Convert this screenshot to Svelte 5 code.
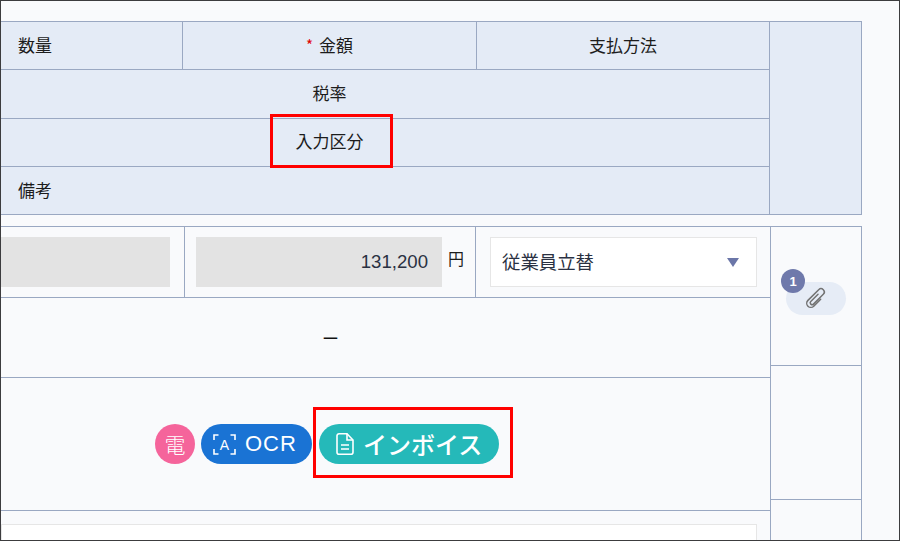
<script>
  const headTop = [
    { label: '数量', cls: 'left' },
    { label: '金額', cls: '', req: true },
    { label: '支払方法', cls: '' }
  ];
</script>

<div class="frame">
  <div class="table head">
    <div class="main">
      <div class="row r48 three-head">
        {#each headTop as c}
          <div class="cell {c.cls}">
            {#if c.req}<span class="req">*</span>{/if}{c.label}
          </div>
        {/each}
      </div>
      <div class="row r49"><div class="cell off">税率</div></div>
      <div class="row r48"><div class="cell off up">入力区分</div></div>
      <div class="row r48 last"><div class="cell left">備考</div></div>
    </div>
    <div class="side"></div>
  </div>

  <div class="table body">
    <div class="main">
      <div class="row amounts">
        <div class="slot first"><div class="gray"></div></div>
        <div class="slot second">
          <div class="gray num">131,200</div>
          <span class="yen">円</span>
        </div>
        <div class="slot third">
          <div class="select">
            <span class="sel-text">従業員立替</span>
            <svg class="caret" width="12" height="9" viewBox="0 0 12 9"><path d="M0 0h12L6 9z" fill="#6b76a8" /></svg>
          </div>
        </div>
      </div>
      <div class="row tax"><span class="dash">ー</span></div>
      <div class="row tags">
        <span class="den">電</span>
        <span class="pill ocr">
          <svg width="23" height="21" viewBox="0 0 23 21" fill="none" stroke="#fff" stroke-width="1.6">
            <path d="M1 6V1h4.500M17.500 1H22v5M1 15v5h4.500M17.500 20H22v-5" />
            <text x="11.500" y="15.500" text-anchor="middle" class="a">A</text>
          </svg>
          <span>OCR</span>
        </span>
        <span class="pill inv">
          <svg width="18" height="22" viewBox="0 0 18 22" fill="none" stroke="#fff" stroke-width="1.6">
            <path d="M1 2.800A2 2 0 0 1 3 .800h8L17 7v12.200a2 2 0 0 1-2 2H3a2 2 0 0 1-2-2z" />
            <path d="M11 .800V7h6M5 12h8M5 16h8" />
          </svg>
          <span class="inv-text">インボイス</span>
        </span>
      </div>
      <div class="row note"><div class="area"></div></div>
    </div>
    <div class="side">
      <div class="sc s1">
        <span class="clip">
          <span class="badge">1</span>
          <svg class="clip-icon" width="24" height="24" viewBox="-12 -12 24 24" fill="none" stroke="#727272" stroke-width="1.800" stroke-linecap="round" stroke-linejoin="round">
            <path transform="rotate(45) scale(.82)" d="M-1.500-5V7.500a2.300 2.300 0 0 0 4.600 0V-9.500a4 4 0 0 0-8 0V9a5 5 0 0 0 10 0V-3" />
          </svg>
        </span>
      </div>
      <div class="sc s2"></div>
      <div class="sc s3"></div>
    </div>
  </div>

  <div class="mark m1"></div>
  <div class="mark m2"></div>
</div>

<style>
  :global(body) {
    margin: 0;
  }
  .frame {
    position: relative;
    box-sizing: border-box;
    width: 900px;
    height: 541px;
    overflow: hidden;
    border: 1px solid #3c3c3e;
    padding-top: 20px;
    background: #f9fafc;
    font-family: "Noto Sans CJK JP", "Liberation Sans", sans-serif;
    font-size: 17px;
    color: #1c1c1c;
  }
  .table {
    display: grid;
    width: 861px;
    box-sizing: border-box;
    border-top: 1px solid #9aa8c2;
    border-right: 1px solid #9aa8c2;
  }
  .main {
    border-right: 1px solid #9aa8c2;
  }
  .head {
    grid-template-columns: 769px 91px;
    background: #e4ebf6;
    border-bottom: 1px solid #9aa8c2;
    height: 194px;
  }
  .body {
    grid-template-columns: 770px 90px;
    margin-top: 11px;
    height: 320px;
  }
  .row {
    box-sizing: border-box;
    display: flex;
    border-bottom: 1px solid #9aa8c2;
  }
  .row.last {
    border-bottom: 0;
  }
  .r48 {
    height: 48px;
  }
  .r49 {
    height: 49px;
  }
  .r48.last {
    height: 47px;
  }
  .cell {
    flex: 1;
    display: flex;
    align-items: center;
    justify-content: center;
    padding-bottom: 3px;
    box-sizing: border-box;
    font-size: 17px;
  }
  .cell.left {
    justify-content: flex-start;
    padding-left: 17px;
  }
  .cell.off {
    padding-right: 111px;
  }
  .cell.up {
    padding-bottom: 5px;
  }
  .three-head .cell:nth-child(1) {
    flex: 0 0 182px;
    border-right: 1px solid #9aa8c2;
  }
  .three-head .cell:nth-child(2) {
    flex: 0 0 294px;
    border-right: 1px solid #9aa8c2;
  }
  .req {
    color: #e00000;
    font-size: 15px;
    line-height: 1;
    margin-right: 6px;
  }
  .amounts {
    height: 71px;
  }
  .slot {
    box-sizing: border-box;
    display: flex;
    align-items: flex-start;
    padding-top: 10px;
  }
  .first {
    flex: 0 0 184px;
    border-right: 1px solid #9aa8c2;
    padding-right: 14px;
  }
  .second {
    flex: 0 0 291px;
    border-right: 1px solid #9aa8c2;
    padding-left: 11px;
  }
  .third {
    flex: 0 0 294px;
    padding-left: 14px;
  }
  .gray {
    background: #e3e3e3;
    height: 50px;
    flex: 1;
  }
  .num {
    flex: 0 0 246px;
    box-sizing: border-box;
    padding-right: 14px;
    text-align: right;
    line-height: 49px;
    font-family: "Liberation Sans", sans-serif;
    font-size: 18.600px;
    color: #2a3142;
  }
  .yen {
    margin-left: 6px;
    font-size: 16px;
    line-height: 42px;
  }
  .select {
    box-sizing: border-box;
    width: 267px;
    height: 50px;
    background: #fff;
    border: 1px solid #e6e6e6;
    display: flex;
    align-items: center;
    justify-content: space-between;
    padding: 0 17px 0 11px;
    font-size: 18.400px;
    color: #2a3142;
  }
  .sel-text {
    margin-top: -2px;
  }
  .tax {
    height: 80px;
    align-items: center;
    justify-content: center;
    padding-right: 110px;
  }
  .dash {
    font-size: 17px;
    color: #111;
  }
  .tags {
    height: 133px;
    padding: 46px 0 0 154px;
    gap: 6px;
  }
  .den {
    width: 40px;
    height: 40px;
    border-radius: 50%;
    background: #f5649b;
    color: #fff;
    font-size: 21px;
    font-weight: 300;
    display: flex;
    align-items: center;
    justify-content: center;
  }
  .pill {
    height: 40px;
    border-radius: 20px;
    color: #fff;
    display: flex;
    align-items: center;
    box-sizing: border-box;
  }
  .ocr {
    width: 111px;
    background: #1a73d4;
    font-family: "Liberation Sans", sans-serif;
    font-size: 22px;
    padding-left: 12px;
    gap: 9px;
    letter-spacing: 1px;
  }
  .a {
    fill: #fff;
    stroke: none;
    font-size: 14px;
    letter-spacing: 0;
  }
  .inv {
    width: 180px;
    margin-left: 1px;
    background: #25b9b9;
    font-size: 24px;
    font-weight: 500;
    padding-left: 17px;
    gap: 9px;
  }
  .inv-text {
    margin-top: -2px;
  }
  .note {
    border-bottom: 0;
    padding-top: 13px;
  }
  .area {
    box-sizing: border-box;
    width: 756px;
    height: 60px;
    background: #fff;
    border: 1px solid #e6e6e6;
  }
  .side {
    display: flex;
    flex-direction: column;
  }
  .head .side {
    display: block;
  }
  .sc {
    box-sizing: border-box;
    border-bottom: 1px solid #9aa8c2;
  }
  .s1 {
    height: 139px;
    padding: 55px 0 0 15px;
  }
  .s2 {
    height: 134px;
  }
  .s3 {
    border-bottom: 0;
    flex: 1;
  }
  .clip {
    position: relative;
    display: flex;
    align-items: center;
    justify-content: center;
    width: 60px;
    height: 33px;
    border-radius: 17px;
    background: #e6ecf6;
  }
  .clip-icon {
    margin-top: -1px;
  }
  .badge {
    position: absolute;
    left: -5px;
    top: -13px;
    width: 24px;
    height: 24px;
    border-radius: 50%;
    background: #6f79ab;
    color: #fff;
    font-family: "Liberation Sans", sans-serif;
    font-size: 13px;
    font-weight: 700;
    display: flex;
    align-items: center;
    justify-content: center;
  }
  .mark {
    position: absolute;
    box-sizing: border-box;
    border: 3px solid #ff0000;
    pointer-events: none;
  }
  .m1 {
    left: 269px;
    top: 113px;
    width: 123px;
    height: 54px;
  }
  .m2 {
    left: 312px;
    top: 406px;
    width: 200px;
    height: 71px;
  }
</style>
